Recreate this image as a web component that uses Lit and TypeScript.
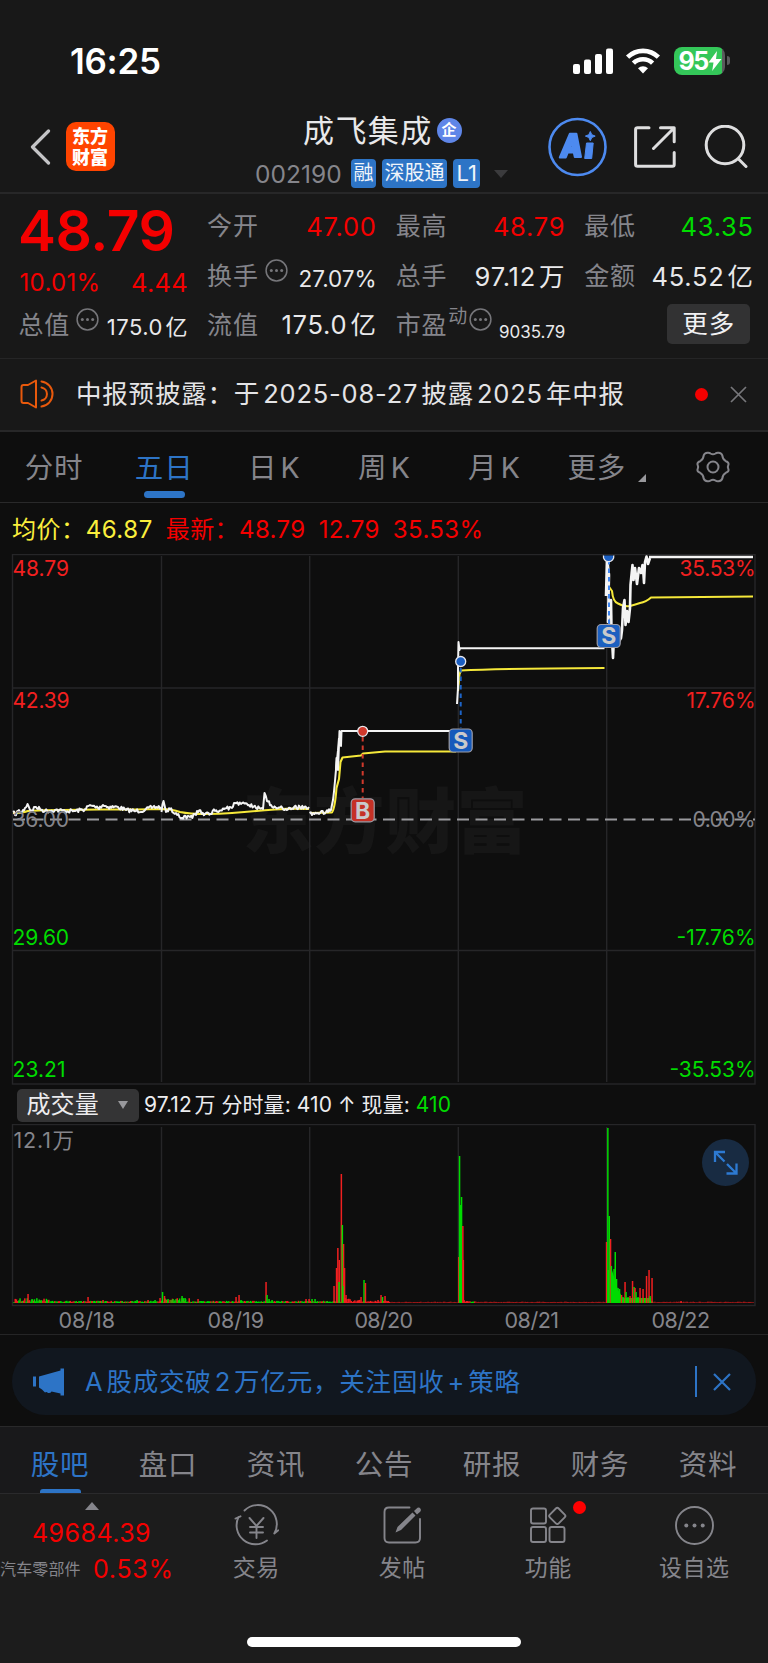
import { LitElement, html, css, svg, nothing } from "lit";
import { customElement, property } from "lit/decorators.js";

type Pt = [number, number];

/** Wraps latin runs that touch CJK characters so they get a small side gap. */
function mix(text: string) {
  const parts = text.split(/([A-Za-z0-9.+%-]+)/).filter((p) => p !== "");
  return parts.map((p, i) => {
    if (!/^[A-Za-z0-9.+%-]+$/.test(p)) return p;
    const cls = `la${i > 0 && !/[：\s]$/.test(parts[i - 1]) ? " l" : ""}${i < parts.length - 1 ? " r" : ""}`;
    return html`<span class=${cls}>${p}</span>`;
  });
}

const base = css`
  :host, * { box-sizing: border-box; }
  svg { display: block; flex: none; }
  .la.l { margin-left: 0.12em; }
  .la.r { margin-right: 0.12em; }
  .red.red { color: #f40000; }
  .green.green { color: #00dc00; }
`;

@customElement("status-bar")
export class StatusBar extends LitElement {
  static styles = [base, css`
    :host { display: flex; height: 96px; padding: 25px 38.500px 0 70px; align-items: center; justify-content: space-between; }
    .time { font-size: 35px; font-weight: 600; color: #fff; line-height: 40px; letter-spacing: -0.3px; }
    .sys { display: flex; align-items: center; }
    .wifi { margin-left: 11px; }
    .bat { margin-left: 13px; display: flex; align-items: center; }
    .cell { width: 51px; height: 28px; border-radius: 8px; background: linear-gradient(90deg, #34c759 48px, #5a5a5c 48px); display: flex; align-items: center; padding-left: 5px; color: #fff; font-weight: 700; font-size: 25px; line-height: 28px; letter-spacing: -1.4px; }
    .tip { width: 3px; height: 9px; margin-left: 2px; border-radius: 0 4px 4px 0; background: #5a5a5c; }
  `];
  render() {
    return html`
      <div class="time">16:25</div>
      <div class="sys">
        <svg width="41" height="26" viewBox="0 0 41 26" fill="#fff">
          <rect x="0" y="16" width="7" height="10" rx="2" /><rect x="11" y="11.5" width="7" height="14.5" rx="2" />
          <rect x="22" y="6" width="7" height="20" rx="2" /><rect x="33" y="0.5" width="7" height="25.5" rx="2" />
        </svg>
        <svg class="wifi" width="36" height="26" viewBox="0 0 36 26" fill="none" stroke="#fff" stroke-width="4.6">
          <path d="M2.6 9.2a22 22 0 0 1 30.8 0" /><path d="M8.4 15.2a13.6 13.6 0 0 1 19.2 0" />
          <path d="M18 25.5l-5-5.2a7.3 7.3 0 0 1 10 0z" fill="#fff" stroke="none" />
        </svg>
        <div class="bat">
          <div class="cell">95<svg width="14" height="20" viewBox="0 0 14 20"><path d="M9 0 0.5 11.5h5L4.2 20 13.5 8H8z" fill="#fff" /></svg></div>
          <div class="tip"></div>
        </div>
      </div>`;
  }
}

@customElement("stock-header")
export class StockHeader extends LitElement {
  static styles = [base, css`
    :host { display: grid; grid-template-columns: 255px 1fr 220px; height: 98px; border-bottom: 2px solid #272728; }
    .left { display: flex; align-items: center; padding: 5px 0 0 29.500px; gap: 15px; }
    .logo { width: 49px; height: 49px; border-radius: 10px; background: #ff4400; color: #fff; font-weight: 900; font-size: 18px; line-height: 21px; padding-top: 4px; text-align: center; }
    .mid { display: flex; flex-direction: column; }
    .name { display: flex; align-items: center; padding: 16px 0 0 48px; height: 53px; font-size: 31px; letter-spacing: 1.400px; line-height: 36px; color: #e8e8ea; white-space: nowrap; }
    .ent { width: 25px; height: 25px; margin-left: 4px; border-radius: 50%; background: #5f86e8; color: #fff; font-size: 15px; font-weight: 700; line-height: 24px; text-align: center; letter-spacing: 0; }
    .meta { display: flex; align-items: center; height: 29px; margin-top: 10px; }
    .code { font-size: 24.5px; color: #85858b; line-height: 28px; width: 96px; letter-spacing: 0.050px; }
    .tag { height: 29px; border-radius: 4px; background: #2d74c6; color: #f0f4fa; font-size: 20px; line-height: 29px; padding: 0 2.5px; margin-right: 6px; white-space: nowrap; }
    .tag.l1 { font-size: 22px; padding: 0 3.500px; }
    .tri { margin-left: 8px; }
    .right { display: flex; align-items: center; padding: 6px 0 0 0; }
    .share { margin-left: 27px; }
    .search { margin-left: 28px; }
  `];
  render() {
    return html`
      <div class="left">
        <svg width="21" height="36" viewBox="0 0 21 36" fill="none" stroke="#c4c4c6" stroke-width="3.2" stroke-linecap="round" stroke-linejoin="round"><path d="M18.500 2 2.500 18l16 16" /></svg>
        <div class="logo">东方<br />财富</div>
      </div>
      <div class="mid">
        <div class="name">成飞集成<span class="ent">企</span></div>
        <div class="meta">
          <span class="code">002190</span><span class="tag">融</span><span class="tag">深股通</span><span class="tag l1">L1</span>
          <svg class="tri" width="14" height="8" viewBox="0 0 14 8"><path d="M0 0h14L7 8z" fill="#3b3b3d" /></svg>
        </div>
      </div>
      <div class="right">
        <svg width="59" height="60" viewBox="0 0 59 60">
          <circle cx="29.500" cy="30" r="28" fill="none" stroke="#4d8af0" stroke-width="2.600" />
          <path fill="#4d8af0" fill-rule="evenodd" stroke="#4d8af0" stroke-width="2" stroke-linejoin="round" d="M21.800 16.800h6.600L33 40h-6.200l-1-4.500h-6L17.800 40.500h-6zM24 25l-2.300 5.300h3.300z" />
          <path fill="#4d8af0" stroke="#4d8af0" stroke-width="1" stroke-linejoin="round" d="M38.500 26h6.700l-1.500 15.500h-7zM42.300 14.500l1.500 3.200 3.400 1.400-3.400 1.400-1.500 3.200-1.500-3.200-3.400-1.400 3.400-1.400z" />
        </svg>
        <svg class="share" width="42" height="42" viewBox="0 0 42 42" fill="none" stroke="#dededf" stroke-width="3" stroke-linecap="round" stroke-linejoin="round">
          <path d="M15 1.800H3.500Q1.600 1.800 1.600 3.500v35q0 1.700 1.900 1.700h35q1.700 0 1.700-1.700V26.500" /><path d="M26.500 1.800h13.700v14M40 2 19.500 22.500" />
        </svg>
        <svg class="search" width="44" height="44" viewBox="0 0 44 44" fill="none" stroke="#dededf" stroke-width="3" stroke-linecap="round"><circle cx="21" cy="20" r="18.800" /><path d="M35 34.500 42 41.500" /></svg>
      </div>`;
  }
}

@customElement("quote-panel")
export class QuotePanel extends LitElement {
  static styles = [base, css`
    :host { display: grid; grid-template-columns: repeat(4, 167.600px); grid-template-rows: 50px 50px 47px; column-gap: 21px; height: 165px; padding: 7px 0 0 19.500px; border-bottom: 1px solid #252526; }
    .cell { display: flex; align-items: center; color: #e9e9eb; font-size: 25.500px; line-height: 30px; white-space: nowrap; letter-spacing: 0.750px; }
    .k { color: #85858b; font-size: 25px; letter-spacing: 0.800px; margin-left: -1px; }
    .v { margin-left: auto; margin-right: -1px; padding-top: 1px; }
    .big { font-size: 57px; font-weight: 600; line-height: 56px; padding-top: 9px; letter-spacing: -0.500px; margin-left: -1.500px; }
    .chg { padding-top: 13px; justify-content: space-between; letter-spacing: 0.300px; margin-right: -1px; }
    .pct { font-size: 24px; }
    .dots { margin: 0 0 11px 6px; }
    .mid { font-size: 22.500px; padding-top: 5px; letter-spacing: 0; }
    .small { font-size: 22px; padding-top: 5px; letter-spacing: 0.500px; }
    .tiny { font-size: 17px; padding-top: 14px; letter-spacing: 0; }
    .sup { color: #85858b; font-size: 19px; margin: 0 0 15px 1px; }
    .sup + .dots { margin-left: 1px; }
    .more { width: 83px; height: 40px; border-radius: 5px; background: #323233; color: #f1f1f3; text-align: center; line-height: 40px; margin: 0 2.500px 1px auto; letter-spacing: 1px; }
  `];
  dots() {
    return html`<svg class="dots" width="23" height="23" viewBox="0 0 23 23" fill="#76767a"><circle cx="11.500" cy="11.500" r="10.400" fill="none" stroke="#76767a" stroke-width="1.500" /><circle cx="6.300" cy="11.500" r="1.500" /><circle cx="11.500" cy="11.500" r="1.500" /><circle cx="16.700" cy="11.500" r="1.500" /></svg>`;
  }
  item(k: string, v: string, cls = "", dots = false, sup = "") {
    return html`<div class="cell"><span class="k">${k}</span>${sup ? html`<span class="sup">${sup}</span>` : nothing}${dots ? this.dots() : nothing}<span class="v ${cls}">${mix(v)}</span></div>`;
  }
  render() {
    return html`
      <div class="cell big red">48.79</div>
      ${this.item("今开", "47.00", "red")}${this.item("最高", "48.79", "red")}${this.item("最低", "43.35", "green")}
      <div class="cell chg red"><span class="pct">10.01%</span><span>4.44</span></div>
      ${this.item("换手", "27.07%", "mid", true)}${this.item("总手", "97.12万")}${this.item("金额", "45.52亿")}
      ${this.item("总值", "175.0亿", "small", true)}${this.item("流值", "175.0亿")}${this.item("市盈", "9035.79", "tiny", true, "动")}
      <div class="cell"><span class="more">更多</span></div>`;
  }
}

@customElement("notice-bar")
export class NoticeBar extends LitElement {
  static styles = [base, css`
    :host { display: flex; align-items: center; height: 73px; padding: 0 21.500px 1px 20px; border-bottom: 2px solid #272728; color: #e4e4e6; }
    .txt { margin-left: 20px; font-size: 25.500px; line-height: 34px; letter-spacing: 0.800px; white-space: nowrap; }
    .dot { width: 13px; height: 13px; border-radius: 50%; background: #f40000; margin-left: auto; margin-right: 21.500px; }
  `];
  render() {
    return html`
      <svg width="36" height="30" viewBox="0 0 36 30" fill="none" stroke="#e8590c" stroke-width="2" stroke-linecap="round" stroke-linejoin="round"><path d="M16 1.500v27L8 24H3.500Q1.500 24 1.500 22V8q0-2 2-2H8z" /><path d="M21.500 2.500a12.600 12.600 0 0 1 0 25M21.500 8.500a6.600 6.600 0 0 1 0 13" /></svg>
      <span class="txt">${mix("中报预披露：于2025-08-27披露2025年中报")}</span>
      <span class="dot"></span>
      <svg width="17" height="17" viewBox="0 0 17 17" stroke="#77777b" stroke-width="1.700"><path d="M1 1l15 15M16 1 1 16" /></svg>`;
  }
}

@customElement("period-tabs")
export class PeriodTabs extends LitElement {
  static styles = [base, css`
    :host { display: grid; grid-template-columns: repeat(5, 110.100px) 101px 1fr; height: 71px; border-bottom: 1px solid #29292a; color: #85858b; font-size: 28.500px; }
    .tab { display: flex; flex-direction: column; align-items: center; padding: 16px 2px 0 0; line-height: 40px; letter-spacing: 0.800px; white-space: nowrap; }
    .tab.on { color: #2d74c6; }
    .bar { width: 41px; height: 7px; margin-top: 3px; border-radius: 4px; background: #2d74c6; }
    .row { display: flex; }
    .tri { margin: 26px 0 0 12px; }
    .more { align-items: flex-start; padding-left: 17px; }
    .gear { display: flex; align-items: center; justify-content: center; padding-left: 7px; }
  `];
  render() {
    return html`
      ${["分时", "五日", "日K", "周K", "月K"].map((t, i) => html`<div class="tab ${i === 1 ? "on" : ""}"><span>${mix(t)}</span>${i === 1 ? html`<span class="bar"></span>` : nothing}</div>`)}
      <div class="tab more"><div class="row">更多<svg class="tri" width="8" height="8" viewBox="0 0 8 8"><path d="M8 0v8H0z" fill="#98989c" /></svg></div></div>
      <div class="gear"><svg width="34" height="34" viewBox="-17 -17 34 34" fill="none" stroke="#85858b" stroke-width="2" stroke-linejoin="round">
        <path d="M-9.300-11.700Q-8.500-14-5.500-14.300-3.500-14.500-2.500-13.500 0-12 2.500-13.500 3.500-14.500 5.500-14.300 8.500-14 9.300-11.700 9.500-7.500 12.800-5.800 15.500-5 15.600-3 14 0 15.600 3 15.500 5 12.800 5.800 9.500 7.500 9.300 11.700 8.500 14 5.500 14.300 3.500 14.500 2.500 13.500 0 12-2.500 13.500-3.500 14.500-5.500 14.300-8.500 14-9.300 11.700-9.500 7.500-12.800 5.800-15.500 5-15.600 3-14 0-15.600-3-15.500-5-12.800-5.800-9.500-7.500-9.300-11.700z" /><circle r="5.500" /></svg></div>`;
  }
}

/* Price anchors in screen space; the minute noise is laid over them. */
const DAY1: Pt[] = [[13, 812], [15, 815], [18, 811], [22, 812], [25, 808], [27.500, 804], [31, 811], [35, 807], [40, 809], [45, 811], [55, 810], [65, 811], [75, 811], [86, 809], [88, 806], [93, 806], [98, 808], [103, 805], [108, 807], [118, 807], [126, 810], [136, 811], [145, 810], [153, 807], [161, 807]];
const DAY2: Pt[] = [[161.500, 812], [163.500, 801], [166, 812], [170, 809], [176, 813], [182, 818], [190, 817], [196, 815], [197, 811], [205, 814], [215, 811], [224, 809], [232, 808], [235, 803], [241, 804], [249, 805], [256, 808], [263, 809], [264.500, 793], [267, 801], [271, 805], [278, 808], [290, 808], [300, 807], [309, 807]];
const DAY3: Pt[] = [[309.500, 813], [312, 815], [318, 813], [326, 812], [331, 810], [333, 800], [335, 781], [337, 760], [339, 738]];

function jitter(a: Pt[], amp: number, seed: number) {
  let s = seed;
  const rnd = () => ((s = (s * 16807) % 2147483647) / 2147483647) - 0.5;
  const out: string[] = [];
  for (let i = 0; i < a.length - 1; i++) {
    const [x0, y0] = a[i];
    const [x1, y1] = a[i + 1];
    const n = Math.max(1, Math.round((x1 - x0) / 1.100));
    for (let k = 0; k < n; k++) {
      const t = k / n;
      out.push(`${(x0 + (x1 - x0) * t).toFixed(1)},${(y0 + (y1 - y0) * t + (k ? rnd() * amp : 0)).toFixed(1)}`);
    }
  }
  const l = a[a.length - 1];
  out.push(`${l[0]},${l[1]}`);
  return out.join(" ");
}

@customElement("price-chart")
export class PriceChart extends LitElement {
  static styles = [base, css`
    :host { display: block; }
    .info { display: flex; height: 51px; align-items: center; padding: 2px 0 0 12px; font-size: 24px; line-height: 30px; white-space: nowrap; letter-spacing: 0.550px; }
    .avg { color: #fbee3c; }
    .avg, .n { margin-right: 13px; }
    .n, .last { letter-spacing: 0.400px; }
    .ax { font-size: 21px; }
    .up { fill: #f22020; }
    .flat { fill: #85858b; }
    .down { fill: #00dc00; }
    .wm { font-size: 71px; font-weight: 900; fill: #161616; }
    .mk { font-size: 23px; font-weight: 700; fill: #c9c9cb; text-anchor: middle; }
  `];
  marker(x: number, y: number, s: string, color: string) {
    return svg`<rect x=${x - 11.500} y=${y - 11.500} width="23" height="23" rx="4" fill=${color} stroke="#9c9ca6" stroke-width="1.200" /><text class="mk" x=${x} y=${y + 8.300}>${s}</text>`;
  }
  render() {
    const rows: [string, string, number, string, number, number][] = [
      ["48.79", "35.53%", 575.500, "up", 56.500, 76], ["42.39", "17.76%", 707.500, "up", 57, 69], ["36.00", "0.00%", 826.500, "flat", 56.500, 63],
      ["29.60", "-17.76%", 944.500, "down", 56.500, 79], ["23.21", "-35.53%", 1076.700, "down", 53, 86]];
    return html`
      <div class="info"><span class="avg">均价：46.87</span><span class="n red">最新：48.79</span><span class="n red">12.79</span><span class="last red">35.53%</span></div>
      <svg width="768" height="531" viewBox="0 554 768 531">
        <text class="wm" x="242.500" y="847" textLength="285">东方财富</text>
        <g fill="none" stroke="#262628" stroke-width="1.400"><rect x="12.500" y="554.500" width="742.500" height="529.500" /><path d="M12 688H755M12 950.500H755M161.500 556V1082M309.700 556V1082M458.300 556V1082M606.700 556V1082" /></g>
        <path d="M13 819.500H755" stroke="#9a9a9e" stroke-width="1.900" stroke-dasharray="12 6.500" />
        <g fill="none" stroke="#f5e83a" stroke-width="2.100" stroke-linejoin="round">
          <path d="M13 813Q22 813 28 811Q60 809.500 100 809.500T161 809Q172 809 180 812Q190 814 205 814T232 813Q255 811 275 809.500T309 809M310 813 332 812.500Q335 808 336.500 788L339 779 340.500 762 342.500 757.500Q352 756.500 361 755.500L363 753.500Q374 752.500 385 751.500H456M458 691 459.500 674 461 670.500Q500 668.500 604.500 668M607 584 612 591Q613 602 618 603.500Q624 607 630 606Q634 605 640 603Q646 602 651 597.500Q700 596.800 753 596.500" />
        </g>
        <g fill="none" stroke="#f4f4f4" stroke-width="2" stroke-linejoin="round">
          <polyline points=${jitter(DAY1, 4, 7)} /><polyline points=${jitter(DAY2, 4, 19)} /><polyline points=${jitter(DAY3, 3.500, 31)} />
          <path d="M336 770 336.500 758 338 770 339.500 731 341 746 341.500 731H456" />
          <path d="M457 704 458 688V668L458.500 642 459.500 650 460 648.300H604.500" />
          <path stroke-width="2.600" d="M606 596 607 558 609 575 608 622 611 600 611.500 630 613 658 614 637 617 645 621 638 622 630 623 608 624.500 600 625.500 625 627 611 628.500 622 630 608 630.500 585 632.500 565 633.500 580 635 568 637 584 639 568 641 573 642.500 565 643.500 575 644 583 645 562 646.500 556.500 648 564 650 558" />
          <path stroke-width="2.400" d="M649 557H753" />
        </g>
        ${rows.map(([a, b, y, c, wa, wb]) => svg`<text class="ax ${c}" x="12.500" y=${y} textLength=${wa}>${a}</text><text class="ax ${c}" x=${755.500 - wb} y=${y} textLength=${wb}>${b}</text>`)}
        <g fill="none" stroke-width="2" stroke-dasharray="4.500 4"><path d="M362.700 737V798" stroke="#d0392c" /><path d="M460.700 668V728" stroke="#1d64c8" /><path d="M609 560V624" stroke="#3f86f0" /></g>
        <g stroke="#e8e8ee" stroke-width="1.300"><circle cx="362.700" cy="731.300" r="5" fill="#d0392c" /><circle cx="460.700" cy="661.500" r="5" fill="#1b5fc2" /><path d="M603.500 555.500A5.200 5.200 0 1 0 613.700 555.500" fill="#1b5fc2" /></g>
        ${this.marker(362.700, 810.300, "B", "#c53126")}${this.marker(460.700, 740.500, "S", "#1559bb")}${this.marker(608.700, 636, "S", "#1c60c0")}
      </svg>`;
  }
}

/* Volume bars: [x, height, colour]. */
const R = "#f02020";
const G = "#00dc00";
const BARS: [number, number, string][] = [
  [28, 9, R], [32, 4, G], [41, 3, G], [88, 6, R], [92, 2, R], [103, 3, R], [106, 2, G], [122, 2, G], [132, 2, G], [137, 3, G], [148, 3, R], [155, 3, G], [160, 5, R], [162.500, 11, G], [164.500, 7, R], [168, 4, G], [173, 4, G], [182, 7, G], [185, 5, G], [198, 4, R],
  [236, 6, R], [239, 8, R], [241, 3, G], [266, 21, R], [267, 8, G], [269, 4, G], [272, 3, G], [306, 4, R], [309, 4, R], [312, 4, G], [315, 4, G], [327, 2, G],
  [334, 17, R], [336.500, 35, R], [337.800, 55, R], [339.200, 43, R], [339, 21, G], [341.300, 129, R], [342.300, 78, G], [343.500, 59, R], [344.500, 35, R], [342.800, 17, G], [346, 8, R], [348, 4, R], [361, 6, R], [364, 23, G], [365.400, 20, R], [378, 3, R], [381, 8, R], [382.500, 6, G], [385, 7, R],
  [458.700, 46, R], [459.500, 147, G], [461.500, 106, G], [462.800, 77, R], [463.300, 43, R], [464, 3, R], [467, 2, R],
  [606.500, 61, R], [607.800, 175, G], [609.200, 87, G], [610.500, 64, R], [611.300, 37, G], [613, 24, G], [614, 34, G], [615.200, 51, G], [616.500, 24, G], [618, 15, G], [619.500, 14, G], [621.500, 8, R], [623, 6, G], [625, 21, R], [626, 11, G], [628, 6, G], [630, 7, R], [632.500, 22, R], [634, 16, G], [635, 15, R], [636, 11, G], [638, 6, G], [640, 15, R], [643, 14, R], [646.500, 27, R], [649, 33, R], [650, 7, G], [652, 25, R], [681, 2, R]];

@customElement("volume-chart")
export class VolumeChart extends LitElement {
  static styles = [base, css`
    :host { display: block; height: 250px; border-bottom: 1px solid #252526; }
    .head { display: flex; align-items: center; height: 40px; padding: 0 0 0 16.500px; font-size: 21px; line-height: 28px; color: #ececee; white-space: pre; letter-spacing: 0.080px; }
    .sel { display: flex; align-items: center; width: 122.500px; height: 33px; margin-right: 5px; padding-left: 10px; border-radius: 5px; background: #343435; font-size: 24px; }
    .sel svg { margin-left: 19px; }
    .plot { display: grid; margin-top: -1px; }
    .plot > * { grid-area: 1 / 1; }
    .fab { width: 47px; height: 47px; margin: 15px 19px 0 auto; border-radius: 50%; background: #182b42; display: flex; align-items: center; justify-content: center; }
    text { font-size: 21.500px; fill: #85858b; }
  `];
  render() {
    let s = 5;
    const rnd = () => (s = (s * 16807) % 2147483647) / 2147483647;
    const low: [number, number, string][] = [];
    for (let x = 14; x < 754; x += 1.200) {
      const busy = x < 50 || (x > 162 && x < 190) || (x > 345 && x < 362) || (x > 610 && x < 652);
      const quiet = (x > 390 && x < 458) || (x > 475 && x < 606) || x > 653;
      low.push([x, quiet ? 0.600 + rnd() * 0.800 : 1 + rnd() * (busy ? 4 : 1.200), quiet ? "#a01818" : x > 345 && x < 470 ? R : rnd() > 0.400 ? G : R]);
    }
    const bar = ([x, h, c]: [number, number, string]) => svg`<rect x=${x - 0.700} y=${1303 - h} width="1.500" height=${h} fill=${c} />`;
    return html`
      <div class="head"><span class="sel">成交量<svg width="10" height="8" viewBox="0 0 10 8"><path d="M0 0h10L5 8z" fill="#98989c" /></svg></span><span>${mix("97.12万")} 分时量: 410 ↑ 现量: <span class="green">410</span></span></div>
      <div class="plot">
        <svg width="768" height="210" viewBox="0 1124 768 210">
          <g fill="none" stroke="#262628" stroke-width="1.400"><rect x="12.500" y="1124.500" width="742.500" height="181" /><path d="M161.500 1127V1303M309.700 1127V1303M458.300 1127V1303M606.700 1127V1303" /></g>
          ${low.map(bar)}<path d="M607.200 1302.500V1270H612L618 1290 623 1298H650V1302.500z" fill=${G} />${BARS.map(bar)}
          <rect x="459" y="1205" width="3" height="98" fill=${G} />
          <text x="13.500" y="1147.500" textLength="37.500">12.1</text><text x="52.500" y="1147.500">万</text>
          ${([["08/18", 58.500, 56.500], ["08/19", 207.500, 56.500], ["08/20", 354.500, 58.500], ["08/21", 504.500, 54.500], ["08/22", 651.500, 58.500]] as [string, number, number][]).map(([d, x, w]) => svg`<text x=${x} y="1328.300" textLength=${w}>${d}</text>`)}
        </svg>
        <div class="fab"><svg width="25" height="25" viewBox="0 0 25 25" fill="none" stroke="#2d7ad2" stroke-width="2.300"><path d="M2 12V2h10M2.500 2.500l9 9M23.500 13.500v10h-10M23 23l-9-9" /></svg></div>
      </div>`;
  }
}

@customElement("promo-banner")
export class PromoBanner extends LitElement {
  static styles = [base, css`
    :host { display: block; height: 92px; padding: 13px 12px 12px; border-bottom: 1px solid #29292a; }
    .pill { display: flex; align-items: center; height: 67px; border-radius: 34px; background: #11171f; padding: 0 25.500px 0 21px; color: #2d74c6; }
    .txt { margin-left: 20px; font-size: 25.500px; letter-spacing: 0.800px; line-height: 34px; white-space: nowrap; }
    .sep { width: 2px; height: 31px; background: #2d74c6; margin-left: auto; margin-right: 15.500px; }
  `];
  render() {
    return html`<div class="pill">
      <svg width="32" height="28" viewBox="0 0 32 28" fill="#2d74c6"><path d="M0 8.500h3v10H0zM6 8.500 27.500 2.500V.500h3.500V27.500h-3.500V25.500l-9-2q-1 2-3.500 1.500-1.500-1.500-3-.500L9 21.500 6 19.500z" /></svg>
      <span class="txt">${mix("A股成交破2万亿元，关注固收+策略")}</span><span class="sep"></span>
      <svg width="18" height="18" viewBox="0 0 18 18" stroke="#2d74c6" stroke-width="2.200"><path d="M1 1l16 16M17 1 1 17" /></svg></div>`;
  }
}

@customElement("section-tabs")
export class SectionTabs extends LitElement {
  static styles = [base, css`
    :host { display: grid; grid-template-columns: repeat(7, 108px); padding-left: 6px; height: 67px; background: #19191b; border-bottom: 1px solid #2a2a2c; font-size: 28.500px; color: #85858b; }
    .tab { display: flex; flex-direction: column; align-items: center; padding-top: 17.500px; line-height: 40px; letter-spacing: 0.800px; }
    .on { color: #2d74c6; }
    .bar { width: 41px; height: 4px; margin-top: auto; border-radius: 3px 3px 0 0; background: #2d74c6; }
  `];
  render() {
    return html`${["股吧", "盘口", "资讯", "公告", "研报", "财务", "资料"].map((t, i) => html`<div class="tab ${i ? "" : "on"}">${t}${i ? nothing : html`<span class="bar"></span>`}</div>`)}`;
  }
}

@customElement("bottom-bar")
export class BottomBar extends LitElement {
  static styles = [base, css`
    :host { display: flex; flex-direction: column; align-items: center; height: 170px; background: #1c1c1c; }
    .row { display: grid; grid-template-columns: 184px repeat(4, 146px); width: 768px; height: 100px; }
    .idx { display: flex; flex-direction: column; padding-top: 8px; font-size: 25px; line-height: 36px; }
    .tri { margin-left: 85px; }
    .num { padding: 5px 0 0 32px; letter-spacing: 0.450px; }
    .sub { display: flex; align-items: center; letter-spacing: 0.700px; }
    .ind { width: 93px; font-size: 16px; color: #85858b; white-space: nowrap; letter-spacing: 0.150px; }
    .act { display: flex; flex-direction: column; align-items: center; padding: 10px 1.500px 0 0; font-size: 23px; line-height: 30px; color: #85858b; letter-spacing: 0.500px; }
    .act svg { margin-bottom: 5.500px; }
    .ico { position: relative; }
    .badge { position: absolute; right: -15px; top: -3.500px; width: 13px; height: 13px; border-radius: 50%; background: #f00; }
    .home { width: 274px; height: 10.500px; margin-top: 42.500px; border-radius: 6px; background: #fff; }
  `];
  @property({ attribute: false }) actions = [
    { t: "交易", i: svg`<path d="M10.500 6.500A19 19 0 0 1 40.300 29.500l4-3.200M33 36.500A19 19 0 0 1 4.500 13M1.500 14.500l5-2.200M4.200 13" /><path d="M15.500 14l7 8 7-8M22.500 22v12M16 23h13M16 28.500h13" />` },
    { t: "发帖", i: svg`<path d="M29.500 3.500H9Q4.500 3.500 4.500 8V34q0 4.500 4.500 4.500H35.500q4.500 0 4.500-4.500V15" /><path fill="#85858b" stroke="none" d="M15.500 28.500l2-5.500 15-14.500 3 3-14.500 14.500zM34 7l3.500-3.300q2-.700 3 1t-.300 3L37 10.500z" />` },
    { t: "功能", i: svg`<rect x="5" y="4.500" width="15" height="15" rx="2" /><rect x="5" y="23" width="15" height="15" rx="2" /><rect x="23.500" y="23" width="15" height="15" rx="2" /><rect x="25" y="5.700" width="12.500" height="12.500" rx="2" transform="rotate(45 31.250 12)" />`, b: true },
    { t: "设自选", i: svg`<circle cx="22.500" cy="21.500" r="18.500" /><g fill="#85858b" stroke="none"><circle cx="14.300" cy="21.500" r="2" /><circle cx="22.500" cy="21.500" r="2" /><circle cx="30.700" cy="21.500" r="2" /></g>` },
  ];
  render() {
    return html`
      <div class="row">
        <div class="idx"><svg class="tri" width="14" height="8" viewBox="0 0 14 8"><path d="M7 0l7 8H0z" fill="#85858b" /></svg>
          <span class="num red">49684.39</span><span class="sub"><span class="ind">汽车零部件</span><span class="red">0.53%</span></span></div>
        ${this.actions.map((a) => html`<div class="act"><span class="ico"><svg width="45" height="43" viewBox="0 0 45 43" fill="none" stroke="#85858b" stroke-width="1.900" stroke-linecap="round" stroke-linejoin="round">${a.i}</svg>${(a as any).b ? html`<span class="badge"></span>` : nothing}</span>${a.t}</div>`)}
      </div>
      <div class="home"></div>`;
  }
}

@customElement("app-root")
export class AppRoot extends LitElement {
  static styles = css`
    :host { display: block; width: 768px; height: 1663px; overflow: hidden; background: #0e0e0e; font-family: Inter, "Noto Sans CJK SC", sans-serif; }
    .top { background: #181818; }
  `;
  render() {
    return html`
      <div class="top"><status-bar></status-bar><stock-header></stock-header><quote-panel></quote-panel><notice-bar></notice-bar></div>
      <period-tabs></period-tabs><price-chart></price-chart><volume-chart></volume-chart>
      <promo-banner></promo-banner><section-tabs></section-tabs><bottom-bar></bottom-bar>`;
  }
}
